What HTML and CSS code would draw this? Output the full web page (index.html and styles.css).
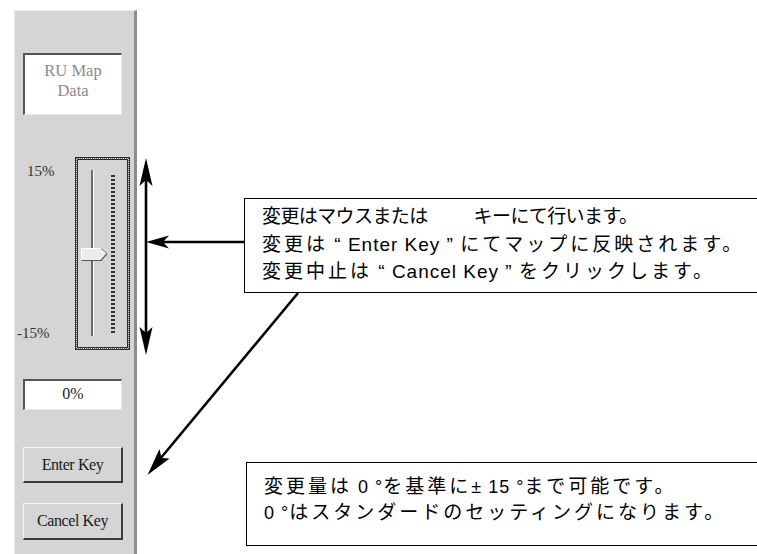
FILE: index.html
```html
<!DOCTYPE html>
<html lang="ja">

<head>
    <meta charset="UTF-8">
    <meta name="viewport" content="width=device-width, initial-scale=1.0">
    <title>RU Map Data</title>
    <link rel="stylesheet" href="styles.css">
</head>

<body>

    <div class="canvas">

        <!-- control panel -->
        <div class="panel">
            <div class="ru-box">
                <span>RU Map</span>
                <span>Data</span>
            </div>

            <div class="slider-row">
                <div class="scale-labels">
                    <span class="max">15%</span>
                    <span class="min">-15%</span>
                </div>
                <div class="slider">
                    <div class="track"></div>
                    <svg class="thumb" width="27" height="13" viewBox="0 0 27 13">
                        <polygon points="0.5,0.5 20,0.5 26,5.5 20,12.5 0.5,12.5" fill="#ececec" />
                        <polyline points="0.5,12.5 0.5,0.5 20,0.5" fill="none" stroke="#fff" stroke-width="1" />
                        <polyline points="0.5,12.5 20,12.5 26,5.5" fill="none" stroke="#555" stroke-width="1.2" />
                        <line x1="20" y1="0.5" x2="26" y2="5.5" stroke="#888" stroke-width="1" />
                    </svg>
                    <div class="ticks"></div>
                </div>
            </div>

            <div class="value-box">0%</div>

            <div class="btn">Enter Key</div>
            <div class="btn">Cancel Key</div>
        </div>

        <!-- arrows -->
        <svg class="arrows" width="757" height="554" viewBox="0 0 757 554">
            <g stroke="#000" stroke-width="2.6" fill="none">
                <line x1="146" y1="176" x2="146" y2="338" />
                <line x1="244" y1="242" x2="160" y2="242" />
                <line x1="298" y1="293" x2="160" y2="459" />
            </g>
            <g fill="#000">
                <polygon points="146,158 152.5,186 146,180 139.5,186" />
                <polygon points="146,355 152.5,327 146,333 139.5,327" />
                <polygon points="146,242 169,235.5 163,242 169,248.5" />
                <polygon points="147.5,475 169.5,458.5 161.5,458 159.5,449" />
            </g>
        </svg>

        <!-- callouts -->
        <div class="note note-top">
            <p class="tight">変更はマウスまたは<span class="gap"></span>キーにて行います。</p>
            <p>変更は<span class="lat"> “ Enter Key ” </span>にてマップに反映されます。</p>
            <p>変更中止は<span class="lat"> “ Cancel Key ” </span>をクリックします。</p>
        </div>

        <div class="note note-bottom">
            <p>変更量は<span class="lat"> 0 °</span>を基準に<span class="lat">± 15 °</span>まで可能です。</p>
            <p><span class="lat">0 °</span>はスタンダードのセッティングになります。</p>
        </div>

    </div>

</body>

</html>
```

FILE: styles.css
```css
body {
    margin: 0;
    background-color: #fff;
    font-family: 'Liberation Serif', serif;
}

.canvas {
    position: relative;
    width: 757px;
    height: 554px;
    overflow: hidden;
    padding-top: 10px;
    box-sizing: border-box;
}

/* left control panel */
.panel {
    margin-left: 14px;
    width: 123px;
    height: 544px;
    box-sizing: border-box;
    background-color: #d5d5d5;
    border-top: 1px solid #ececec;
    border-left: 1px solid #ececec;
    border-right: 3px solid #8c8c8c;
    padding-top: 42px;
    display: flex;
    flex-direction: column;
    color: #333;
    font-size: 15px;
}

.ru-box {
    margin-left: 8px;
    width: 99px;
    height: 62px;
    box-sizing: border-box;
    background-color: #fff;
    border-top: 2px solid #555;
    border-left: 2px solid #555;
    border-right: 1px solid #e8e8e8;
    border-bottom: 1px solid #e8e8e8;
    display: flex;
    flex-direction: column;
    align-items: center;
    justify-content: center;
    line-height: 20px;
    font-size: 16.5px;
    color: #8a8a8a;
    padding-bottom: 8px;
}

.slider-row {
    margin-top: 42px;
    display: flex;
    height: 193px;
}

.scale-labels {
    width: 60px;
    padding-left: 2px;
    padding-top: 6px;
    padding-bottom: 9px;
    box-sizing: border-box;
    display: flex;
    flex-direction: column;
    justify-content: space-between;
    line-height: 16px;
}

.scale-labels .max {
    margin-left: 10px;
}

.slider {
    position: relative;
    width: 55px;
    height: 193px;
    box-sizing: border-box;
    border: 3px double #2a2a2a;
    outline: 1px dotted #666;
    outline-offset: -2px;
}

.track {
    position: absolute;
    left: 13px;
    top: 10px;
    width: 2px;
    height: 166px;
    background-color: #6a6a6a;
    border-right: 1px solid #fff;
}

.thumb {
    position: absolute;
    left: 3px;
    top: 88px;
}

.ticks {
    position: absolute;
    left: 33px;
    top: 15px;
    width: 4px;
    height: 158px;
    background: repeating-linear-gradient(#333 0 2px, transparent 2px 4px);
}

.value-box {
    margin-top: 29px;
    margin-left: 8px;
    width: 99px;
    height: 31px;
    box-sizing: border-box;
    background-color: #fff;
    border-top: 2px solid #555;
    border-left: 2px solid #555;
    border-right: 1px solid #e8e8e8;
    border-bottom: 1px solid #e8e8e8;
    text-align: center;
    line-height: 26px;
    font-size: 16px;
    color: #222;
}

.btn {
    margin-left: 8px;
    width: 100px;
    height: 36px;
    box-sizing: border-box;
    border-top: 1px solid #f4f4f4;
    border-left: 1px solid #f4f4f4;
    border-right: 2px solid #3a3a3a;
    border-bottom: 2px solid #3a3a3a;
    display: flex;
    align-items: center;
    justify-content: center;
    font-size: 16px;
    color: #1a1a1a;
    letter-spacing: -0.4px;
}

.value-box + .btn {
    margin-top: 37px;
}

.btn + .btn {
    margin-top: 20px;
    height: 37px;
}

/* annotation layer */
.arrows {
    position: absolute;
    left: 0;
    top: 0;
    pointer-events: none;
}

.note {
    position: absolute;
    width: 540px;
    box-sizing: border-box;
    border: 1.5px solid #000;
    background-color: #fff;
    font-family: 'Liberation Sans', 'Noto Sans CJK JP', sans-serif;
    font-size: 19px;
    letter-spacing: 3px;
    color: #000;
}

.note p {
    margin: 0;
    white-space: nowrap;
}

.note .tight {
    letter-spacing: -0.6px;
}

.note .lat {
    font-size: 19px;
    letter-spacing: 1px;
}

.note-bottom .lat {
    font-size: 18px;
}

.note-top {
    left: 244px;
    top: 198px;
    height: 95px;
    padding: 4px 0 0 17px;
    line-height: 27.5px;
}

.note-bottom {
    left: 246px;
    top: 462px;
    height: 84px;
    padding: 11px 0 0 17px;
    line-height: 26px;
}

.gap {
    display: inline-block;
    width: 46px;
}
```
